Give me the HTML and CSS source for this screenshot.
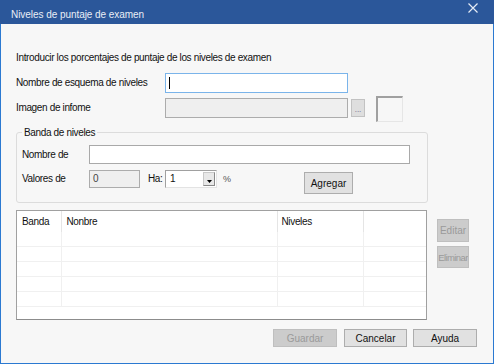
FILE: index.html
```html
<!DOCTYPE html>
<html lang="es">
<head>
    <meta charset="UTF-8">
    <meta name="viewport" content="width=device-width, initial-scale=1.0">
    <title>Niveles de puntaje de examen</title>
    <link rel="stylesheet" href="styles.css">
</head>
<body>
    <div class="window">
        <div class="titlebar">
            <span class="title">Niveles de puntaje de examen</span>
            <svg class="close" width="10" height="10" viewBox="0 0 10 10">
                <path d="M0.5 0.5 L9.5 9.5 M9.5 0.5 L0.5 9.5" stroke="#e6ecf5" stroke-width="1.2" fill="none"/>
            </svg>
        </div>
        <div class="content">
            <p class="intro">Introducir los porcentajes de puntaje de los niveles de examen</p>

            <div class="row row-name">
                <label class="label-wide">Nombre de esquema de niveles</label>
                <div class="textbox focused wide"><span class="caret"></span></div>
            </div>

            <div class="row row-image">
                <label class="label-wide">Imagen de infome</label>
                <div class="textbox disabled wide"></div>
                <button type="button" class="browse">...</button>
                <div class="picture"></div>
            </div>

            <fieldset class="band">
                <legend>Banda de niveles</legend>
                <div class="row row-band">
                    <label class="label-short">Nombre de</label>
                    <div class="textbox band-name"></div>
                </div>
                <div class="row row-values">
                    <label class="label-short">Valores de</label>
                    <div class="textbox disabled from">0</div>
                    <label class="to-label">Ha:</label>
                    <div class="combo">
                        <span class="combo-value">1</span>
                        <span class="combo-btn">
                            <svg width="5" height="3" viewBox="0 0 5 3"><path d="M0 0 H5 L2.5 3 Z" fill="#000"/></svg>
                        </span>
                    </div>
                    <span class="pct">%</span>
                    <button type="button" class="btn add">Agregar</button>
                </div>
            </fieldset>

            <div class="list-area">
                <div class="listview">
                    <table>
                        <colgroup>
                            <col class="c-band">
                            <col class="c-name">
                            <col class="c-levels">
                            <col>
                        </colgroup>
                        <thead>
                            <tr><th>Banda</th><th>Nonbre</th><th>Niveles</th><th></th></tr>
                        </thead>
                        <tbody>
                            <tr><td></td><td></td><td></td><td></td></tr>
                            <tr><td></td><td></td><td></td><td></td></tr>
                            <tr><td></td><td></td><td></td><td></td></tr>
                            <tr><td></td><td></td><td></td><td></td></tr>
                            <tr><td></td><td></td><td></td><td></td></tr>
                        </tbody>
                    </table>
                </div>
                <div class="side-buttons">
                    <button type="button" class="btn off edit">Editar</button>
                    <button type="button" class="btn off delete">Eliminar</button>
                </div>
            </div>

            <div class="footer">
                <button type="button" class="btn off save">Guardar</button>
                <button type="button" class="btn cancel">Cancelar</button>
                <button type="button" class="btn help">Ayuda</button>
            </div>
        </div>
    </div>
</body>
</html>
```

FILE: styles.css
```css
body {
    margin: 0;
    font-family: "Liberation Sans", Arial, sans-serif;
    font-size: 10px;
    letter-spacing: -0.35px;
    color: #111;
}
.window {
    width: 494px;
    height: 364px;
    background: #f7f7f7;
}
.titlebar {
    height: 24px;
    background: #2b579a;
    display: flex;
    justify-content: space-between;
    align-items: flex-start;
}
.title {
    color: #e9eef6;
    padding: 9px 0 0 11px;
    line-height: 12px;
    letter-spacing: -0.05px;
}
.close {
    margin: 3px 16px 0 0;
}
.content {
    height: 340px;
    box-sizing: border-box;
    border: 1px solid #2b79d1;
    border-top: none;
    padding-left: 15px;
}
.intro {
    margin: 0;
    padding-top: 27px;
    line-height: 13px;
}
.row {
    display: flex;
    align-items: center;
}
.row-name { margin-top: 9px; height: 20px; }
.row-image { margin-top: 5px; height: 20px; align-items: flex-start; }
.label-wide { width: 149px; line-height: 20px; }
.label-short { width: 67px; line-height: 18px; }

.textbox {
    box-sizing: border-box;
    height: 20px;
    background: #fff;
    border: 1px solid #a9a9a9;
    padding-left: 3px;
    line-height: 16px;
    display: flex;
    align-items: center;
}
.textbox.wide { width: 183px; }
.textbox.focused { border-color: #7ab4ea; }
.textbox.disabled { background: #efefef; border-color: #acacac; color: #444; }
.caret {
    width: 1px;
    height: 12px;
    background: #000;
}
.browse {
    margin: 1px 0 0 3px;
    width: 14px;
    height: 18px;
    padding: 0 0 2px;
    box-sizing: border-box;
    border: 1px solid #c2c2c2;
    background: #dedede;
    font: inherit;
    font-size: 8px;
    color: #6a5a8a;
    display: flex;
    align-items: flex-end;
    justify-content: center;
}
.picture {
    margin: -2px 0 0 11px;
    width: 27px;
    height: 26px;
    box-sizing: border-box;
    border-top: 2px solid #a0a0a0;
    border-left: 2px solid #a0a0a0;
    border-right: 1px solid #e6e6e6;
    border-bottom: 1px solid #e6e6e6;
}

.band {
    margin: 8px 0 0;
    width: 412px;
    box-sizing: border-box;
    border: 1px solid #dcdcdc;
    border-radius: 3px;
    padding: 6px 17px 8px 5px;
}
.band legend {
    padding: 0 2px;
    line-height: 13px;
}
.row-band { height: 19px; }
.band-name { width: 321px; height: 19px; }
.row-values {
    margin-top: 6px;
    align-items: flex-start;
}
.from { width: 51px; height: 18px; }
.to-label {
    margin-left: 8px;
    width: 17px;
    line-height: 18px;
    white-space: nowrap;
}
.combo {
    width: 52px;
    height: 18px;
    box-sizing: border-box;
    background: #fff;
    border: 1px solid #a0a0a0;
    border-right-color: #e3e3e3;
    border-bottom-color: #e3e3e3;
    display: flex;
    justify-content: space-between;
    padding: 1px;
}
.combo-value { padding-left: 3px; line-height: 14px; }
.combo-btn {
    width: 12px;
    background: #e8e8e8;
    border: 1px solid #c8c8c8;
    border-right-color: #8a8a8a;
    border-bottom-color: #8a8a8a;
    box-sizing: border-box;
    display: flex;
    align-items: center;
    justify-content: center;
    padding-top: 4px;
}
.pct {
    margin-left: 6px;
    width: 10px;
    line-height: 18px;
    color: #555;
    font-size: 9px;
}

.btn {
    box-sizing: border-box;
    padding: 0;
    font: inherit;
    color: #111;
    background: #e1e1e1;
    border: 1px solid #adadad;
    border-radius: 0;
    white-space: nowrap;
}
.btn.off {
    background: #cccccc;
    border-color: #bfbfbf;
    color: #9a9a9a;
}
.add {
    margin: 2px 0 0 71px;
    width: 49px;
    height: 22px;
}

.list-area {
    margin-top: 7px;
    display: flex;
    align-items: flex-start;
}
.listview {
    width: 411px;
    height: 110px;
    box-sizing: border-box;
    border: 1px solid #a0a0a0;
    border-bottom-color: #8c8c8c;
    background: #fff;
    overflow: hidden;
}
.listview table {
    width: 100%;
    border-collapse: collapse;
    table-layout: fixed;
}
.c-band { width: 44px; }
.c-name { width: 216px; }
.c-levels { width: 86px; }
.listview th {
    height: 21px;
    padding: 0 0 0 5px;
    text-align: left;
    font-weight: normal;
    vertical-align: middle;
    border-right: 1px solid #e5e5e5;
}
.listview th:nth-child(3) { padding-left: 4px; }
.listview th:last-child { border-right: none; }
.listview td {
    height: 14px;
    padding: 0;
    border-bottom: 1px solid #f0f0f0;
    border-right: 1px solid #f0f0f0;
}
.listview td:last-child { border-right: none; }

.side-buttons {
    margin: 9px 0 0 10px;
    display: flex;
    flex-direction: column;
    gap: 4px;
}
.edit { width: 32px; height: 23px; }
.delete {
    width: 32px;
    height: 22px;
    font-size: 9.5px;
    letter-spacing: -0.6px;
    overflow: hidden;
}

.footer {
    margin: 9px 16px 0 0;
    display: flex;
    justify-content: flex-end;
    gap: 7px;
}
.footer .btn { height: 18px; }
.save { width: 64px; }
.cancel { width: 63px; }
.help { width: 64px; margin-left: -1px; }
```
